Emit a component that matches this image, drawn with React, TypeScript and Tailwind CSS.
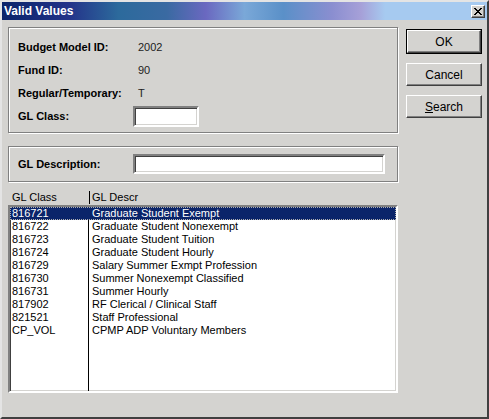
import React from 'react';

const rows = [
  ['816721', 'Graduate Student Exempt'],
  ['816722', 'Graduate Student Nonexempt'],
  ['816723', 'Graduate Student Tuition'],
  ['816724', 'Graduate Student Hourly'],
  ['816729', 'Salary Summer Exmpt Profession'],
  ['816730', 'Summer Nonexempt Classified'],
  ['816731', 'Summer Hourly'],
  ['817902', 'RF Clerical / Clinical Staff'],
  ['821521', 'Staff Professional'],
  ['CP_VOL', 'CPMP ADP Voluntary Members'],
];

const sunken =
  'border-2 border-t-[#808080] border-l-[#808080] border-b-white border-r-white shadow-[inset_1px_1px_0_#404040,inset_-1px_-1px_0_#d4d3d0] bg-white';
const etched = 'border border-[#808080] shadow-[inset_1px_1px_0_#fff,1px_1px_0_#fff]';
const raised =
  'border border-t-white border-l-white border-b-[#404040] border-r-[#404040] shadow-[inset_-1px_-1px_0_#808080] bg-[#d4d3d0]';

const Btn: React.FC<{ def?: boolean; children: React.ReactNode }> = ({ def, children }) => (
  <div className={`w-[76px] ${def ? 'h-[25px] border border-black' : 'h-[23px]'}`}>
    <button className={`w-full h-full flex items-center justify-center text-[12px] text-black ${raised}`}>
      {children}
    </button>
  </div>
);

export default function App() {
  return (
    <div
      className="w-[489px] h-[419px] bg-[#d4d3d0] border-2 border-t-[#e4e4e4] border-l-[#e4e4e4] border-b-[#404040] border-r-[#404040] flex flex-col overflow-hidden"
      style={{ fontFamily: '"Liberation Sans", Arial, sans-serif' }}
    >
      {/* title bar */}
      <div className="h-[18px] bg-[linear-gradient(to_right,#0a246a,#24348a_14%,#2c6a9c_24%,#3a6aa2_34%,#6a68c0_42%,#7aa8d8_50%,#5a90c8_58%,#8a8ed0_68%,#a6a0d8_74%,#a6caf0_79%,#a6caf0)] flex items-center justify-between pl-[2px] pr-[2px]">
        <span className="text-white font-bold text-[12px] leading-none">Valid Values</span>
        <div className={`w-[14px] h-[13px] flex items-center justify-center ${raised}`}>
          <svg width="8" height="7" viewBox="0 0 8 7">
            <path d="M0 0 L7 7 M1 0 L8 7 M7 0 L0 7 M8 0 L1 7" stroke="#000" strokeWidth="1" />
          </svg>
        </div>
      </div>

      <div className="flex flex-row pl-[6px] pt-[7px]">
        <div className="w-[390px] flex flex-col">
          {/* group 1 */}
          <div className={`h-[106px] ${etched} pt-[8px] pl-[9px]`}>
            {[
              ['Budget Model ID:', '2002'],
              ['Fund ID:', '90'],
              ['Regular/Temporary:', 'T'],
            ].map(([l, v]) => (
              <div key={l} className="h-[23px] flex items-center text-[11px]">
                <span className="w-[115px] font-bold text-black">{l}</span>
                <span className="pl-[5px] text-[#222]">{v}</span>
              </div>
            ))}
            <div className="h-[23px] flex items-center text-[11px]">
              <span className="w-[115px] font-bold text-black">GL Class:</span>
              <div className={`w-[66px] h-[21px] ${sunken}`} />
            </div>
          </div>

          {/* group 2 */}
          <div className={`mt-[13px] h-[36px] ${etched} pl-[9px] flex items-center`}>
            <span className="w-[115px] font-bold text-[11px] text-black">GL Description:</span>
            <div className={`w-[252px] h-[20px] ${sunken}`} />
          </div>

          {/* header */}
          <div className="mt-[8px] h-[14px] flex items-center text-[11px] text-black">
            <span className="w-[81px] pl-[4px]">GL Class</span>
            <span className="border-l border-black h-[13px] pl-[2px] leading-[13px]">GL Descr</span>
          </div>

          {/* list */}
          <div className={`mt-px h-[188px] ${sunken} flex flex-col`}>
            <div className="flex-1 flex flex-col bg-[linear-gradient(to_right,transparent_78px,#000_78px,#000_79px,transparent_79px)]">
              {rows.map(([c, d], i) => (
                <div
                  key={c}
                  className={`h-[13px] flex items-center text-[11px] leading-none ${
                    i === 0 ? 'bg-[#0a246a] text-white outline outline-1 outline-dotted outline-[#b0b0b0] -outline-offset-1' : 'text-black'
                  }`}
                >
                  <span className="w-[81px] pl-[2px]">{c}</span>
                  <span className="pl-[1px]">{d}</span>
                </div>
              ))}
            </div>
          </div>
        </div>

        {/* buttons */}
        <div className="ml-[8px] pt-[2px] flex flex-col gap-[9px]">
          <Btn def>OK</Btn>
          <Btn>Cancel</Btn>
          <Btn>
            <span>
              <span className="underline">S</span>earch
            </span>
          </Btn>
        </div>
      </div>
    </div>
  );
}
